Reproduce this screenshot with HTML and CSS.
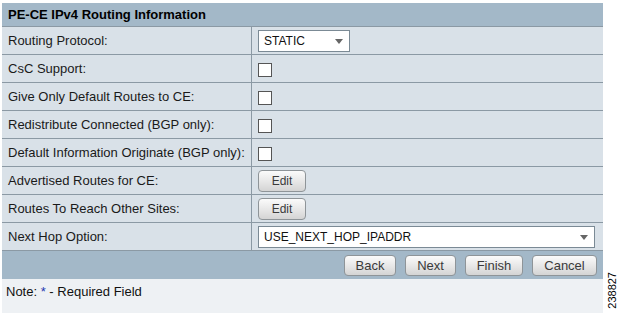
FILE: index.html
```html
<!DOCTYPE html>
<html lang="en">
<head>
    <meta charset="UTF-8">
    <title>PE-CE IPv4 Routing Information</title>
    <link rel="stylesheet" href="styles.css">
</head>
<body>
    <div class="panel">
        <div class="panel-head">PE-CE IPv4 Routing Information</div>

        <div class="row">
            <div class="label">Routing Protocol:</div>
            <div class="field">
                <div class="select select-small">STATIC<span class="arrow"></span></div>
            </div>
        </div>
        <div class="row">
            <div class="label">CsC Support:</div>
            <div class="field"><span class="check"></span></div>
        </div>
        <div class="row">
            <div class="label">Give Only Default Routes to CE:</div>
            <div class="field"><span class="check"></span></div>
        </div>
        <div class="row">
            <div class="label">Redistribute Connected (BGP only):</div>
            <div class="field"><span class="check"></span></div>
        </div>
        <div class="row">
            <div class="label">Default Information Originate (BGP only):</div>
            <div class="field"><span class="check"></span></div>
        </div>
        <div class="row">
            <div class="label">Advertised Routes for CE:</div>
            <div class="field"><a href="#" class="button btn-edit">Edit</a></div>
        </div>
        <div class="row">
            <div class="label">Routes To Reach Other Sites:</div>
            <div class="field"><a href="#" class="button btn-edit">Edit</a></div>
        </div>
        <div class="row">
            <div class="label">Next Hop Option:</div>
            <div class="field">
                <div class="select select-wide">USE_NEXT_HOP_IPADDR<span class="arrow"></span></div>
            </div>
        </div>

        <div class="panel-foot">
            <a href="#" class="button btn-back">Back</a>
            <a href="#" class="button btn-next">Next</a>
            <a href="#" class="button btn-finish">Finish</a>
            <a href="#" class="button btn-cancel">Cancel</a>
        </div>

        <div class="note">Note: <span class="req">*</span> - Required Field</div>
    </div>

    <div class="fig-id">238827</div>
</body>
</html>
```

FILE: styles.css
```css
html, body {
    margin: 0;
    padding: 0;
    height: 100%;
}

body {
    font-family: "Liberation Sans", Arial, sans-serif;
    font-size: 13px;
    color: #000;
    background: #fff;
    display: flex;
    align-items: flex-start;
    overflow: hidden;
}

.panel {
    margin: 3px 0 0 2px;
    width: 601px;
    height: 310px;
    background: #eef1f4;
    display: flex;
    flex-direction: column;
}

.panel-head {
    height: 23px;
    line-height: 23px;
    padding-left: 6px;
    background: #a3b8c8;
    font-weight: bold;
}

.row {
    display: grid;
    grid-template-columns: 250px 1fr;
    height: 27px;
    border-top: 1px solid #8b99a4;
    background: #d9e1e8;
}

.label {
    display: flex;
    align-items: center;
    padding-left: 6px;
    border-right: 1px solid #8b99a4;
    white-space: nowrap;
    color: #1a1a1a;
}

.field {
    display: flex;
    align-items: center;
    padding-left: 6px;
}

.select {
    position: relative;
    height: 20px;
    line-height: 20px;
    padding-left: 5px;
    background: #fff;
    border: 1px solid #7b8a95;
    font-size: 12px;
    color: #111;
}

.select-small {
    width: 85px;
}

.select-wide {
    width: 330px;
}

.arrow {
    position: absolute;
    right: 6px;
    top: 8px;
    border-left: 4px solid transparent;
    border-right: 4px solid transparent;
    border-top: 5px solid #666;
}

.check {
    width: 12px;
    height: 12px;
    border: 1px solid #555;
    background: #fff;
    margin-top: 2px;
}

.button {
    display: inline-block;
    box-sizing: border-box;
    height: 21px;
    line-height: 19px;
    text-align: center;
    border: 1px solid #8e9498;
    border-radius: 4px;
    background: linear-gradient(#fbfbfb, #e4e4e4 60%, #d4d4d4);
    color: #3a3a3a;
    font-size: 13px;
    text-decoration: none;
}

.btn-edit {
    width: 48px;
    height: 22px;
    line-height: 20px;
    font-size: 12px;
}

.panel-foot {
    display: flex;
    justify-content: flex-end;
    align-items: center;
    gap: 9px;
    height: 28px;
    padding-right: 6px;
    border-top: 1px solid #8b99a4;
    background: #a3b8c8;
}

.btn-back { width: 52px; }
.btn-next { width: 51px; }
.btn-finish { width: 58px; }
.btn-cancel { width: 65px; }

.note {
    padding: 5px 0 0 4px;
    font-size: 13px;
    color: #111;
}

.req {
    color: #2438b0;
}

.fig-id {
    margin: 272px 0 0 4px;
    writing-mode: vertical-rl;
    transform: rotate(180deg);
    font-size: 11px;
    line-height: 11px;
}
```
